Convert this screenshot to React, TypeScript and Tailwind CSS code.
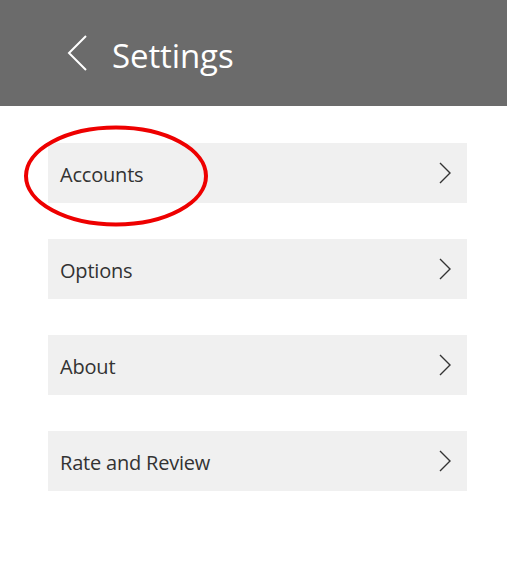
import React from "react";

const items = ["Accounts", "Options", "About", "Rate and Review"];

function ChevronRight() {
  return (
    <svg width="14" height="22" viewBox="0 0 14 22" fill="none" className="shrink-0">
      <path d="M2 1 L12 11 L2 21" stroke="#333333" strokeWidth="1.4" />
    </svg>
  );
}

export default function App() {
  return (
    <div className="w-[507px] h-[580px] bg-white relative overflow-hidden" style={{ fontFamily: '"Open Sans", "Noto Sans", sans-serif' }}>
      <div className="h-[106px] bg-[#6b6b6b] flex items-center pl-[66px]">
        <svg width="24" height="36" viewBox="0 0 24 36" fill="none" className="shrink-0">
          <path d="M20 1 L3 18 L20 35" stroke="#ffffff" strokeWidth="2" />
        </svg>
        <span className="ml-[22px] text-white text-[33px] leading-none pt-[4px] tracking-[-0.1px]">Settings</span>
      </div>
      <div className="flex flex-col gap-[36px] pt-[37px] px-[48px] pr-[40px]">
        {items.map((item) => (
          <div key={item} className="h-[60px] bg-[#f0f0f0] flex items-center justify-between pl-[12px] pr-[15px]">
            <span className="text-[20px] text-[#333333] tracking-[-0.2px] pt-[3px]">{item}</span>
            <ChevronRight />
          </div>
        ))}
      </div>
      <svg className="absolute left-[23px] top-[125px]" width="188" height="104" viewBox="0 0 188 104" fill="none">
        <ellipse cx="93" cy="51" rx="90" ry="48.5" stroke="#ee0000" strokeWidth="4" />
      </svg>
    </div>
  );
}
